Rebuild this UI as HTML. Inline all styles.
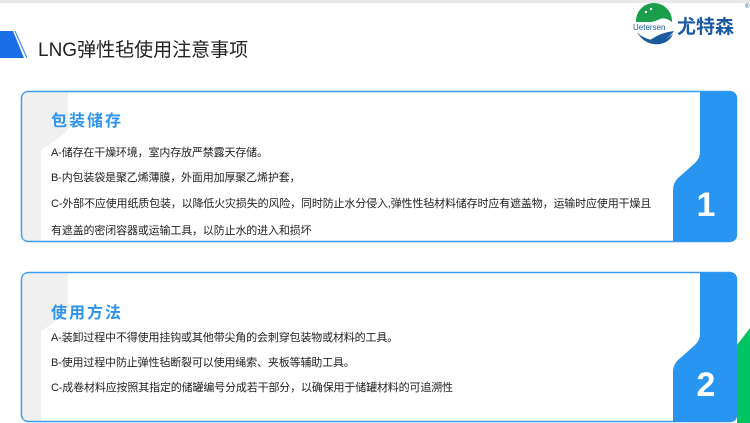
<!DOCTYPE html>
<html><head><meta charset="utf-8"><style>
*{margin:0;padding:0;box-sizing:border-box}
body{width:750px;height:423px;overflow:hidden;background:#fff;font-family:"Liberation Sans","Noto Sans CJK SC",sans-serif;position:relative;color:#222}
.abs{position:absolute}
.title{left:38px;top:35px;font-size:19px;color:#222;white-space:nowrap}
.h{font-size:16px;font-weight:bold;color:#2e93ec;letter-spacing:2px;white-space:nowrap}
.t{font-size:11px;color:#222;white-space:nowrap;letter-spacing:-0.15px}
.num{color:#fff;font-size:34px;font-weight:bold;width:40px;text-align:center}
</style></head><body>
<div class="abs" style="left:0;top:0;width:750px;height:3px;background:#e8e8e8"></div>
<svg class="abs" style="left:0;top:0" width="750" height="423">
<polygon points="0,31 13,31 24,58 0,58" fill="#1a6fe8"/>
<line x1="15" y1="31" x2="27" y2="58" stroke="#2a7fee" stroke-width="1"/>
<polygon points="737,345 750,328 750,423 737,423" fill="#00c462"/>
<!-- card 1 -->
<rect x="21.5" y="91.5" width="715" height="150" rx="7" fill="#fff" stroke="#3d9bef" stroke-width="1.5"/>
<path d="M22.5,98 Q22.5,92.5 28,92.5 L68,92.5 L68,130 Q60,138 41,150 L41,240.5 L28,240.5 Q22.5,240.5 22.5,235 Z" fill="#f0f0f0"/>
<path d="M700,91.5 L730,91.5 Q737,91.5 737,98.5 L737,234.5 Q737,241.5 730,241.5 L673,241.5 L673,190 Q673,183 678,178 L695,163 Q700,158 700,152 Z" fill="#2896f0"/>
<!-- card 2 -->
<rect x="21.5" y="272.5" width="715" height="149" rx="7" fill="#fff" stroke="#3d9bef" stroke-width="1.5"/>
<path d="M22.5,279 Q22.5,273.5 28,273.5 L68,273.5 L68,311 Q60,319 41,331 L41,420.5 L28,420.5 Q22.5,420.5 22.5,415 Z" fill="#f0f0f0"/>
<path d="M700,272.5 L730,272.5 Q737,272.5 737,279.5 L737,415 Q737,422 730,422 L673,422 L673,372 Q673,365 678,360 L695,345 Q700,340 700,334 Z" fill="#2896f0"/>
<!-- logo -->
<path d="M636,22 A18,18 0 0 1 672,20 L672,22 Q664,16 658,20 L652,22 Z" fill="#1a9e4a"/>
<circle cx="646" cy="12" r="1.2" fill="#fff"/><circle cx="651" cy="9" r="1.2" fill="#fff"/>
<path d="M637,32 Q645,46 660,44 Q670,42 673,34 Q664,42 652,40 Q642,38 637,32 Z" fill="#1a5a9c"/>
<path d="M650,40 Q662,32 674,31 Q668,40 656,42 Z" fill="#1a5a9c"/>
<text x="633" y="30" font-size="8" fill="#1a5a9c" font-family="Liberation Sans">Uetersen</text>
<text x="745" y="8" font-size="6" fill="#1a5a9c">®</text>
</svg>
<div class="abs" style="left:677px;top:12px;font-size:19px;font-weight:bold;color:#1a5aa0;font-family:'Noto Sans CJK SC',sans-serif">尤特森</div>
<div class="abs title">LNG弹性毡使用注意事项</div>

<div class="abs h" style="left:51px;top:107px">包装储存</div>
<div class="abs t" style="left:51px;top:144px">A-储存在干燥环境，室内存放严禁露天存储。</div>
<div class="abs t" style="left:51px;top:169px">B-内包装袋是聚乙烯薄膜，外面用加厚聚乙烯护套，</div>
<div class="abs t" style="left:51px;top:195px">C-外部不应使用纸质包装，以降低火灾损失的风险，同时防止水分侵入,弹性性毡材料储存时应有遮盖物，运输时应使用干燥且</div>
<div class="abs t" style="left:51px;top:222px">有遮盖的密闭容器或运输工具，以防止水的进入和损坏</div>
<div class="abs num" style="left:686px;top:186px">1</div>

<div class="abs h" style="left:51px;top:299px">使用方法</div>
<div class="abs t" style="left:51px;top:329px">A-装卸过程中不得使用挂钩或其他带尖角的会刺穿包装物或材料的工具。</div>
<div class="abs t" style="left:51px;top:354px">B-使用过程中防止弹性毡断裂可以使用绳索、夹板等辅助工具。</div>
<div class="abs t" style="left:51px;top:379px">C-成卷材料应按照其指定的储罐编号分成若干部分，以确保用于储罐材料的可追溯性</div>
<div class="abs num" style="left:686px;top:366px">2</div>
</body></html>
